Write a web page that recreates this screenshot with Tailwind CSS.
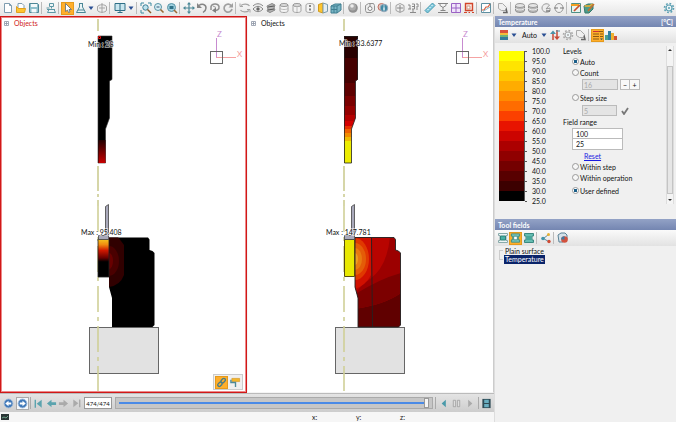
<!DOCTYPE html>
<html lang="en">
<head>
<meta charset="UTF-8">
<meta name="viewport" content="width=device-width, initial-scale=1.0">
<title>Temperature</title>
<script src="https://cdn.jsdelivr.net/npm/@tailwindcss/browser@4"></script>
</head>
<body class="flex h-screen flex-col overflow-hidden bg-[#f0f0f0] font-['Lato','Open_Sans',sans-serif] text-[7px] leading-[10px] text-[#111]">

<!-- Icon sprite, every icon is drawn on a 12x12 grid -->
<svg class="hidden">
  <symbol id="new" viewBox="0 0 12 12"><path d="M2.5 1.5h5l2 2v7h-7z" fill="#fff" stroke="#7f9db0"/><path d="M7.5 1.5v2h2" fill="none" stroke="#7f9db0"/></symbol>
  <symbol id="open" viewBox="0 0 12 12"><path d="M3 1.5h4l2 2v3H3z" fill="#fff" stroke="#7f9db0"/><path d="M1.5 10.5v-6l2 2h7l-1 4z" fill="#ffc52e" stroke="#e0a020"/></symbol>
  <symbol id="save" viewBox="0 0 12 12"><path d="M1.5 1.5h8l1 1v8h-9z" fill="#8fc0cc" stroke="#4f8796"/><path d="M3 2h6v3H3zM3.5 7h5v3.500h-5z" fill="#f3f8fa"/></symbol>
  <symbol id="forge" viewBox="0 0 12 12"><path d="M4.500 1.500h4v3h-4zM6.500 4.500v2M2 7.500h8M2.500 10.500l1.500-3h5l1.500 3zM1.500 6h3" fill="#eef5f7" stroke="#5c97a5"/></symbol>
  <symbol id="cursor" viewBox="0 0 12 12"><path d="M3.500 1.500v8l2-1.500 1 2.500 1.500-.6-1-2.400h2.500z" fill="#fff" stroke="#5a6b78" stroke-width=".8"/></symbol>
  <symbol id="flask" viewBox="0 0 12 12"><path d="M4 1.500h4M4.500 2v3L1.500 10.500h9L7.500 5V2M3 8h6" fill="#e9f4f6" stroke="#4a8796"/></symbol>
  <symbol id="half" viewBox="0 0 12 12"><path d="M1.500 5c0-3 9-3 9 0v3c0 3-9 3-9 0zM6 1v10M3 6h6" fill="#eee" stroke="#a5a5a5"/></symbol>
  <symbol id="monitor" viewBox="0 0 12 12"><path d="M1 1.500h10v7H1z" fill="#c9e6ef" stroke="#2e6f86"/><path d="M6 2v6M3.500 10.500h5M6 8.500v2" stroke="#2e6f86"/></symbol>
  <symbol id="zoomfit" viewBox="0 0 12 12"><path d="M1 4V1h3M8 1h3v3M1 8v3h3" fill="none" stroke="#3d8aa0"/><circle cx="5.500" cy="5.500" r="2.700" fill="#bfe3ee" stroke="#3d7f96"/><path d="M7.500 7.500 11 11" stroke="#8a5a2a" stroke-width="1.400"/></symbol>
  <symbol id="zoomout" viewBox="0 0 12 12"><circle cx="5" cy="5" r="3.500" fill="#d6edf4" stroke="#5793a5"/><path d="M3.500 5h3" stroke="#357"/><path d="m7.500 7.500 3 3" stroke="#9a6a34" stroke-width="1.600"/></symbol>
  <symbol id="zoomin" viewBox="0 0 12 12"><circle cx="5.500" cy="5.500" r="4" fill="#9ed0df" stroke="#5793a5"/><path d="M3.500 4h4v3h-4z" fill="#2f7288"/><path d="m8 8 3 3" stroke="#9a6a34" stroke-width="1.600"/></symbol>
  <symbol id="move" viewBox="0 0 12 12"><path d="M6 1v10M1 6h10" stroke="#4a8796" stroke-width="1.200"/><path d="m6 0 2 2.500H4zM6 12l2-2.500H4zM0 6l2.500-2v4zM12 6 9.500 4v4z" fill="#4a8796"/></symbol>
  <symbol id="undo" viewBox="0 0 12 12"><path d="M3 3.500c3-2.500 7-1 7 2.500 0 2.500-1.500 3.500-3 4.500" fill="none" stroke="#858585" stroke-width="1.500"/><path d="M1 1v5h5z" fill="#858585"/></symbol>
  <symbol id="orbit" viewBox="0 0 12 12"><path d="M2 8V4.500C3 1.500 9 1 10 4.500c.5 3-2 4-4 4" fill="none" stroke="#909090" stroke-width="1.500"/><path d="M7 5.500v5.500l-4-2.500z" fill="#808080"/><path d="m4 4 3 1.500" stroke="#999"/></symbol>
  <symbol id="refresh" viewBox="0 0 12 12"><path d="M9.500 4A4 4 0 1 0 10 7" fill="none" stroke="#a0a0a0" stroke-width="1.700"/><path d="M11 1v4.500H6.500z" fill="#a0a0a0"/></symbol>
  <symbol id="loop" viewBox="0 0 12 12"><path d="M2 3.500c2-2 7-2 8.500.5M10 8.500c-2 2-7 2-8.500-.5" fill="none" stroke="#a5a5a5" stroke-width="1.200"/><path d="M1 1.500v3h3M11 10.500v-3H8" fill="none" stroke="#a5a5a5"/></symbol>
  <symbol id="eye" viewBox="0 0 12 12"><path d="M1 4c3-3 7-3 10 0M1 7c3-3.500 7-3.500 10 0-3 3.500-7 3.500-10 0z" fill="#ececec" stroke="#858585"/><circle cx="6" cy="7" r="1.700" fill="#666"/></symbol>
  <symbol id="solid" viewBox="0 0 12 12"><path d="m2 4 5-2.500 3 1.500-1 3 1 2-5 2.500L2 9l1-2z" fill="#b5b5b5" stroke="#858585"/><path d="m3 5 6-1M3 8l6-1" stroke="#555"/></symbol>
  <symbol id="cyl" viewBox="0 0 12 12"><path d="M2 3v6c0 2 8 2 8 0V3" fill="#f3f3f3" stroke="#a3a3a3"/><ellipse cx="6" cy="3" rx="4" ry="1.500" fill="#ddd" stroke="#999"/><path d="M2 6c0 2 8 2 8 0" fill="none" stroke="#bbb"/></symbol>
  <symbol id="cylopen" viewBox="0 0 12 12"><path d="M2 3v6c0 2 8 2 8 0V3z" fill="#f3f3f3" stroke="#a3a3a3"/><ellipse cx="6" cy="3" rx="4" ry="1.500" fill="#ddd" stroke="#999"/><path d="M6 4v6" stroke="#bbb"/></symbol>
  <symbol id="cyldash" viewBox="0 0 12 12"><path d="M2 3v6c0 2 8 2 8 0V3c0-2-8-2-8 0z" fill="#f5f5f5" stroke="#a3a3a3"/><path d="M6 3v7" stroke="#555" stroke-width="1.400" stroke-dasharray="2 1.500"/></symbol>
  <symbol id="cylcut" viewBox="0 0 12 12"><path d="M1.500 2.500 6 1v10l-4.500-1.500z" fill="#ffc52e" stroke="#cf9a20"/><path d="m6 1 4.500 1.500v7L6 11z" fill="#e4edf2" stroke="#7a9bab"/></symbol>
  <symbol id="cube" viewBox="0 0 12 12"><path d="m1 4 4-2h6v6l-4 3H1z" fill="#78b4c4" stroke="#3f7f91"/><path d="M1 4h6v7M7 4l4-2M4 4v7M1 7.500h6" fill="none" stroke="#3f7f91"/></symbol>
  <symbol id="sphere" viewBox="0 0 12 12"><circle cx="6" cy="6" r="4.800" fill="#8f8f8f"/><circle cx="5.500" cy="5" r="3.500" fill="#adadad"/><circle cx="5" cy="4" r="1.800" fill="#ececec"/></symbol>
  <symbol id="box" viewBox="0 0 12 12"><path d="m1.500 3.500 3-2h5l1 2v5l-3 2h-5l-1-2z" fill="#eee" stroke="#949494"/><circle cx="6" cy="6.500" r="2" fill="#fff" stroke="#888"/><path d="M6 2v2" stroke="#888"/></symbol>
  <symbol id="info" viewBox="0 0 12 12"><circle cx="4.500" cy="5" r="3.500" fill="#e6c8c2" stroke="#c07060"/><circle cx="7" cy="6" r="3.800" fill="#3f89a4" stroke="#9ab"/><path d="M7 3.500v1M7 5.300v3.200" stroke="#fff" stroke-width="1.300"/></symbol>
  <symbol id="boxpick" viewBox="0 0 12 12"><path d="M2 3.500 6 1.500l4 2v5l-4 2-4-2z" fill="#eee" stroke="#a0a0a0"/><path d="M6 3v7M3 6h6" stroke="#888"/></symbol>
  <symbol id="numbers" viewBox="0 0 12 12"><path d="M1 3h2v4M1 7h3M5 2h2.500v5H5M5 4.500h2.500M9 2h2v3H9M9 7h2M6 7v4M3 10.500h6" fill="none" stroke="#8a8a8a"/></symbol>
  <symbol id="ruler" viewBox="0 0 12 12"><path d="M1 8.500 8.500 1 11 3.500 3.500 11z" fill="#7fc8dc" stroke="#4a9ab0"/><path d="m3.500 7 1 1m1-3 1 1m1-3 1 1" stroke="#fff"/></symbol>
  <symbol id="caliper" viewBox="0 0 12 12"><path d="M1 1.500h10M3 1.500v2l3 2 3-2v-2M6 5.500v3M1 10.500h10M3.500 8.500h5" fill="none" stroke="#858585"/></symbol>
  <symbol id="grid" viewBox="0 0 12 12"><path d="M1.500 1.500h9v9h-9zM6 1.500v9M1.500 6h9" fill="#f0e4fa" stroke="#9a62c4"/></symbol>
  <symbol id="select" viewBox="0 0 12 12"><path d="M2.500 1.500h7v7h-7z" fill="#fbe9e2" stroke="#d2452b" stroke-width="1.400"/><path d="M4 4h3v3H4z" fill="#fff" stroke="#c98"/><path d="M1 10.500h3M5.500 10.500H7M9 10.500h2" stroke="#d2452b"/></symbol>
  <symbol id="chart" viewBox="0 0 12 12"><path d="M1.500 1.500h9v9h-9z" fill="#fff" stroke="#5e8fa0"/><path d="M1.500 8H4l2-3h2l2-3" fill="none" stroke="#d65b3a" stroke-width="1.200"/><path d="M3 9.500 10 5" stroke="#8bc"/></symbol>
  <symbol id="copy" viewBox="0 0 12 12"><path d="M1.500 1.500h4l4 4v3h-5l-3-2z" fill="#f0f0f0" stroke="#aaa"/><path d="M6 10.500h4l-1-4" fill="none" stroke="#666" stroke-width="1.500"/></symbol>
  <symbol id="disc" viewBox="0 0 12 12"><path d="M1.500 3.500v5c0 2.500 9 2.500 9 0v-5" fill="#b8b8b8" stroke="#8e8e8e"/><ellipse cx="6" cy="3.500" rx="4.500" ry="2" fill="#e5e5e5" stroke="#999"/><path d="M1.500 6c0 2.500 9 2.500 9 0" fill="none" stroke="#eee"/></symbol>
  <symbol id="pie" viewBox="0 0 12 12"><path d="M9.500 3C7 .5 2 2 2 6s5 5.500 8 3V6L6 7z" fill="#eee" stroke="#999"/><path d="M6 9h4" stroke="#777" stroke-width="1.400"/></symbol>
  <symbol id="ring" viewBox="0 0 12 12"><ellipse cx="6" cy="6" rx="4" ry="4.500" fill="#f1f1f1" stroke="#999"/><path d="M1 6h4M7 6h4" stroke="#777"/></symbol>
  <symbol id="note" viewBox="0 0 12 12"><path d="M1.500 1.500h9v9h-9z" fill="#e9f3ee" stroke="#4e9086"/><path d="M1 3h8" stroke="#f2a020" stroke-width="2"/><path d="m4 9 6-6" stroke="#c9502d" stroke-width="1.700"/></symbol>
  <symbol id="paint" viewBox="0 0 12 12"><path d="m1 4 4-2h5v5l-4 4H2z" fill="#4d9c8a" stroke="#35786b"/><path d="M1.500 4h5l3-2" stroke="#f2b030" stroke-width="1.500" fill="none"/><path d="m5 9 6-7" stroke="#c9702d" stroke-width="1.500"/></symbol>
  <symbol id="gear" viewBox="0 0 12 12"><circle cx="6" cy="6" r="4.500" fill="none" stroke="currentColor" stroke-width="1.600" stroke-dasharray="1.760 1.760"/><circle cx="6" cy="6" r="3" fill="#eef5f7" stroke="currentColor" stroke-width="1.200"/><circle cx="6" cy="6" r="1" fill="currentColor"/></symbol>
  <symbol id="caret" viewBox="0 0 8 12"><path d="M1.500 4.500h5L4 8z" fill="#2a4f93"/></symbol>
  <symbol id="palette" viewBox="0 0 12 12"><path d="M2 1h8v3H2z" fill="#d9503a"/><path d="M2 4h8v2H2z" fill="#f4bc38"/><path d="M2 6h8v2H2z" fill="#6fb37a"/><path d="M2 8h8v3H2z" fill="#337a9a"/></symbol>
  <symbol id="swap" viewBox="0 0 12 12"><path d="M4 11V3M8 1v8" stroke="#c64a36" stroke-width="1.500"/><path d="M1 5 4 1.500 7 5" fill="#4b93a8"/><path d="M5 7.500 8 11l3-3.500" fill="#c64a36"/><path d="M7 2h4" stroke="#4b93a8"/></symbol>
  <symbol id="legend" viewBox="0 0 12 12"><path d="M1 2.500h10M1 5h6M1 7.500h6M1 10h6" stroke="#8a5a14"/><path d="M1 2.500h6" stroke="#c33"/><path d="M8 5h3M8 7.500h3" stroke="#8a5a14"/><path d="M8 9.500h3L9.500 11z" fill="#246"/></symbol>
  <symbol id="hist" viewBox="0 0 12 12"><path d="M0 11V6h3v5z" fill="#4da08f"/><path d="M3 11V2h3v9z" fill="#2e7fa0"/><path d="M6 11V4h3v7z" fill="#f0b030"/><path d="M9 11V7h3v4z" fill="#cf5236"/></symbol>
  <symbol id="field" viewBox="0 0 12 12"><path d="M1.500 1.500h9v2H9v5h1.500v2h-9v-2H3v-5H1.500z" fill="#eef5f5" stroke="#8aa"/><path d="M3.500 4h5v4h-5z" fill="#46b0a4" stroke="#2f8077"/></symbol>
  <symbol id="fieldtool" viewBox="0 0 12 12"><path d="M1.500 1.500h9v2.500H9v4h1.500v2.500h-9V8H3V4H1.500z" fill="#7ccac0" stroke="#3b8a82"/><path d="M4 4h4v4H4z" fill="#fff" stroke="#3b8a82"/></symbol>
  <symbol id="fieldall" viewBox="0 0 12 12"><path d="M1.500 1.500h9v2.500H9v4h1.500v2.500h-9V8H3V4H1.500z" fill="#66bdb2" stroke="#3b8a82"/><path d="M4 4h4v4H4z" fill="#46a89c"/></symbol>
  <symbol id="share" viewBox="0 0 12 12"><path d="m8.500 2.500-5 4 5 3" fill="none" stroke="#5a8da0"/><circle cx="8.500" cy="2.500" r="1.500" fill="#e8b030"/><circle cx="3" cy="6.500" r="1.800" fill="#3f93a8"/><circle cx="9" cy="9.500" r="1.700" fill="#cf4a34"/></symbol>
  <symbol id="stop" viewBox="0 0 12 12"><path d="m1 3 3-2h4l2 2v4l-4 3H2z" fill="#d5e2ea" stroke="#5b8296"/><circle cx="7.500" cy="7.500" r="3.300" fill="#d2523e"/><path d="M7.500 7.500V4.200a3.300 3.300 0 0 0-3.300 3.300z" fill="#3f78a0"/></symbol>
  <symbol id="back" viewBox="0 0 12 12"><circle cx="6" cy="6" r="4.800" fill="#3f78b8" stroke="#9bb8d8"/><path d="M9 5H6V3L2.500 6 6 9V7h3z" fill="#fff"/></symbol>
  <symbol id="fwd" viewBox="0 0 12 12"><circle cx="6" cy="6" r="4.800" fill="#3f78b8" stroke="#9bb8d8"/><path d="M3 5h3V3l3.500 3L6 9V7H3z" fill="#fff"/></symbol>
  <symbol id="first" viewBox="0 0 12 12"><path d="M2.500 2v8.500" stroke="currentColor" stroke-width="1.500"/><path d="M9.500 2v8.500L4 6.200z" fill="currentColor"/></symbol>
  <symbol id="prev" viewBox="0 0 12 12"><path d="M11 4.500H6V2L1 6l5 4V7.500h5z" fill="currentColor"/></symbol>
  <symbol id="play" viewBox="0 0 12 12"><path d="M8.500 2v8L4 6z" fill="currentColor"/></symbol>
  <symbol id="pause" viewBox="0 0 12 12"><path d="M2.500 2.500h2.500v7H2.500zM7 2.500h2.500v7H7z" fill="#ddd" stroke="#999" stroke-width=".8"/></symbol>
  <symbol id="film" viewBox="0 0 12 12"><path d="M1.500 1h9v10h-9z" fill="#2e4a55"/><path d="M3.500 2h5v3.500h-5zM3.500 6.500h5V10h-5z" fill="#69aec0"/></symbol>
  <symbol id="link" viewBox="0 0 12 12"><g fill="none" stroke="#4a7d86" stroke-width="1.500"><rect x="-2.500" y="-1.500" width="5.500" height="3.400" rx="1.700" transform="translate(4 8) rotate(-45)"/><rect x="-2.500" y="-1.500" width="5.500" height="3.400" rx="1.700" transform="translate(7.500 4) rotate(-45)"/></g></symbol>
  <symbol id="roller" viewBox="0 0 12 12"><path d="M2 1.500h8.500V5H2z" fill="#f4b62c" stroke="#d09018" stroke-width=".6"/><path d="M1 3v3h5v5" fill="none" stroke="#4d8a98" stroke-width="1.500"/></symbol>
  <symbol id="triad" viewBox="0 0 32 34">
    <path d="M8.500 7v20" stroke="#c78bd0"/><path d="M8.500 26.500H28" stroke="#f5a3a3"/>
    <rect x="2.500" y="20.500" width="12" height="12" fill="none" stroke="#666"/>
  </symbol>
</svg>

<!-- Main toolbar -->
<header class="flex h-4 shrink-0 items-center bg-linear-to-b from-[#fafafa] to-[#e6e6e6] pl-px [&_button]:flex [&_button]:h-[13px] [&_button]:w-[13px] [&_button]:shrink-0 [&_button]:items-center [&_button]:justify-center [&_hr]:mx-px [&_hr]:h-3 [&_hr]:w-[2px] [&_hr]:border-0 [&_hr]:border-l [&_hr]:border-[#bbb] [&_svg]:size-3 [&_svg]:shrink-0">
  <button aria-label="New"><svg><use href="#new"/></svg></button>
  <button aria-label="Open"><svg><use href="#open"/></svg></button>
  <button aria-label="Save"><svg><use href="#save"/></svg></button>
  <hr>
  <button aria-label="Process"><svg><use href="#forge"/></svg></button>
  <hr>
  <button aria-label="Select" class="border border-[#e59a1c] bg-[#ffae2b]"><svg><use href="#cursor"/></svg></button>
  <button aria-label="Material"><svg><use href="#flask"/></svg></button>
  <svg class="w-2!"><use href="#caret"/></svg>
  <button aria-label="Symmetry"><svg><use href="#half"/></svg></button>
  <hr>
  <button aria-label="Windows" class="w-[15px]!"><svg><use href="#monitor"/></svg></button>
  <svg class="w-2!"><use href="#caret"/></svg>
  <hr>
  <button aria-label="Zoom to fit"><svg><use href="#zoomfit"/></svg></button>
  <button aria-label="Zoom out"><svg><use href="#zoomout"/></svg></button>
  <button aria-label="Zoom in"><svg><use href="#zoomin"/></svg></button>
  <hr>
  <button aria-label="Pan"><svg><use href="#move"/></svg></button>
  <button aria-label="Rotate back"><svg><use href="#undo"/></svg></button>
  <button aria-label="Orbit"><svg><use href="#orbit"/></svg></button>
  <button aria-label="Refresh"><svg><use href="#refresh"/></svg></button>
  <hr>
  <button aria-label="Swap"><svg><use href="#loop"/></svg></button>
  <button aria-label="Visibility"><svg><use href="#eye"/></svg></button>
  <button aria-label="Solid"><svg><use href="#solid"/></svg></button>
  <button aria-label="Cylinder"><svg><use href="#cyl"/></svg></button>
  <button aria-label="Open cylinder"><svg><use href="#cylopen"/></svg></button>
  <button aria-label="Axis"><svg><use href="#cyldash"/></svg></button>
  <button aria-label="Cut"><svg><use href="#cylcut"/></svg></button>
  <button aria-label="Mesh"><svg><use href="#cube"/></svg></button>
  <hr>
  <button aria-label="Shading"><svg><use href="#sphere"/></svg></button>
  <hr>
  <button aria-label="Box"><svg><use href="#box"/></svg></button>
  <button aria-label="Info"><svg><use href="#info"/></svg></button>
  <hr>
  <button aria-label="Pick"><svg><use href="#boxpick"/></svg></button>
  <button aria-label="Values"><svg><use href="#numbers"/></svg></button>
  <hr>
  <button aria-label="Ruler"><svg><use href="#ruler"/></svg></button>
  <button aria-label="Caliper"><svg><use href="#caliper"/></svg></button>
  <button aria-label="Grid"><svg><use href="#grid"/></svg></button>
  <button aria-label="Region"><svg><use href="#select"/></svg></button>
  <hr>
  <button aria-label="Chart"><svg><use href="#chart"/></svg></button>
  <hr>
  <button aria-label="Copy"><svg><use href="#copy"/></svg></button>
  <hr>
  <button aria-label="Disc"><svg><use href="#disc"/></svg></button>
  <button aria-label="Discs"><svg><use href="#disc"/></svg></button>
  <button aria-label="Sector"><svg><use href="#pie"/></svg></button>
  <button aria-label="Ring"><svg><use href="#ring"/></svg></button>
  <hr>
  <button aria-label="Notes"><svg><use href="#note"/></svg></button>
  <button aria-label="Paint"><svg><use href="#paint"/></svg></button>
  <button aria-label="Settings" class="mr-px ml-auto text-[#5a9fb2]"><svg><use href="#gear"/></svg></button>
</header>

<div class="flex min-h-0 grow">
  <main class="flex min-w-0 grow flex-col">
    <div class="grid min-h-0 grow grid-cols-2 bg-white">

      <!-- Left view -->
      <section class="relative min-h-0 border border-[#d01818] outline -outline-offset-2 outline-[#e88]">
        <button class="absolute top-px left-[3px] flex items-center gap-[5px] text-[#d01818]">
          <svg class="size-[5px]" viewBox="0 0 5 5"><path d="M.5.5h4v4h-4zM2.500 1v3M1 2.500h3" fill="none" stroke="#8a93a3" stroke-width=".8"/></svg>Objects
        </button>
        <svg class="block h-full w-full" viewBox="1 17 245 375">
          <defs>
            <linearGradient id="tip" x2="0" y2="1"><stop offset="0" stop-color="#200"/><stop offset="1" stop-color="#c80000"/></linearGradient>
            <linearGradient id="heat" x2="0" y2="1"><stop offset="0" stop-color="#f5c820"/><stop offset=".15" stop-color="#f08a10"/><stop offset=".3" stop-color="#d01800"/><stop offset=".5" stop-color="#600"/><stop offset=".6" stop-color="#000"/></linearGradient>
            <clipPath id="die"><path d="M109 237.500h39l1.500 2v10.500l3 1 2 2v72l-2 2h-40.500v-29l-3-11z"/></clipPath>
          </defs>
          <rect x="89.500" y="327.500" width="69" height="46" fill="#e2e2e2" stroke="#666"/>
          <path d="M98 19v12M98 166v25M98 194v3M98 200v6" stroke="#d6d6a8" stroke-width="2"/>
          <path d="M98 206v185" stroke="#d0d098" stroke-width="2" stroke-dasharray="26 5 4 5" opacity=".8"/>
          <path d="M98 36h14v43.500l-2.500 1.500v37l-4 11v34H98z" stroke="#333" stroke-width=".6"/>
          <path d="M98.500 140h7v23h-7z" fill="url(#tip)"/>
          <path d="M98.500 36.500h2v2h-2z" fill="none" stroke="#e01010"/>
          <g clip-path="url(#die)">
            <path d="M108 237h47v91h-47z"/>
            <path d="M108 237h10l6 8v30q-4 11-16 12z" fill="#300000"/>
            <ellipse cx="109" cy="261" rx="10" ry="15" fill="#4a0000"/>
            <ellipse cx="109" cy="261" rx="4" ry="8" fill="#680000"/>
          </g>
          <path d="M98 239h11v38H98z" fill="url(#heat)" stroke="#222" stroke-width=".8"/>
          <path d="M98.500 235.500h7v-29l3-2v35h-10z" fill="#a9a9bb" stroke="#444" stroke-width=".8"/>
          <use href="#triad" x="208" y="31" width="32" height="34"/>
          <g class="text-[7px]" stroke="#fff" stroke-opacity=".7" stroke-width="1.500" paint-order="stroke" fill="#111">
            <text x="88" y="47">Min : 28</text>
            <text x="81" y="235">Max : 95.408</text>
          </g>
          <text x="217" y="37" class="text-[8px]" fill="#c78bd0">Z</text>
          <text x="237" y="57" class="text-[8px]" fill="#f59a9a">X</text>
        </svg>
        <div class="absolute right-[3px] bottom-[2px] flex h-4 w-[30px] items-center justify-around border border-[#ccc] bg-[#f0f0f0]">
          <button aria-label="Link views" class="border border-[#e59a1c] bg-[#ffae2b]"><svg class="size-[11px]"><use href="#link"/></svg></button>
          <button aria-label="Apply style"><svg class="size-[11px]"><use href="#roller"/></svg></button>
        </div>
      </section>

      <!-- Right view -->
      <section class="relative min-h-0 border border-[#f4f4f4] border-r-[#ccc]">
        <button class="absolute top-px left-[3px] flex items-center gap-[5px]">
          <svg class="size-[5px]" viewBox="0 0 5 5"><path d="M.5.5h4v4h-4zM2.500 1v3M1 2.500h3" fill="none" stroke="#8a93a3" stroke-width=".8"/></svg>Objects
        </button>
        <svg class="block h-full w-full" viewBox="2 17 245 375">
          <defs>
            <clipPath id="punch"><path d="M98 36h14v43.500l-2.500 1.500v37l-4 11v34H98z"/></clipPath>
          </defs>
          <rect x="89.500" y="327.500" width="69" height="46" fill="#e2e2e2" stroke="#666"/>
          <path d="M98 19v12M98 166v25M98 194v3M98 200v6" stroke="#d6d6a8" stroke-width="2"/>
          <path d="M98 206v185" stroke="#d0d098" stroke-width="2" stroke-dasharray="26 5 4 5" opacity=".8"/>
          <g clip-path="url(#punch)">
            <path d="M98 36h14v22H98z" fill="#280000"/>
            <path d="M98 58h14v25H98z" fill="#450000"/>
            <path d="M98 83h14v13H98z" fill="#5e0000"/>
            <path d="M98 96h14v10H98z" fill="#7a0000"/>
            <path d="M98 106h14v9H98z" fill="#940000"/>
            <path d="M98 115h14v6H98z" fill="#b40000"/>
            <path d="M98 121h14v5H98z" fill="#d40000"/>
            <path d="M98 126h14v3H98z" fill="#e83000"/>
            <path d="M98 129h14v4H98z" fill="#ee6000"/>
            <path d="M98 133h14v4H98z" fill="#f08c00"/>
            <path d="M98 137h14v4H98z" fill="#eebb00"/>
            <path d="M98 141h14v22H98z" fill="#ecec00"/>
          </g>
          <path d="M98.500 36.500h13v43l-2 1.500v37l-4 11v34h-7z" fill="none" stroke="#222" stroke-width=".8"/>
          <g clip-path="url(#die)">
            <path d="M108 237h47v91h-47z" fill="#9c0000"/>
            <path d="M108 327v-18q30-4 47-16v35z" fill="#600000"/>
            <path d="M108 309q30-4 47-16v-20q-22 6-47 22z" fill="#7c0000"/>
            <path d="M108 237h36q-3 30-20 42-8 5-16 16z" fill="#b80400"/>
            <path d="M108 237h17v38q-5 10-16 14z" fill="#d01000"/>
            <ellipse cx="109" cy="259" rx="14" ry="21" fill="#e03800"/>
            <ellipse cx="109" cy="259" rx="11" ry="16" fill="#e45c08"/>
            <ellipse cx="109" cy="259" rx="7" ry="11" fill="#e87a10"/>
            <ellipse cx="109" cy="259" rx="3" ry="6" fill="#eca020"/>
          </g>
          <path d="M109 237.500h39l1.500 2v10.500l3 1 2 2v72l-2 2h-40.500v-29l-3-11zM125.500 238l1 89" fill="none" stroke="#222" stroke-width=".9"/>
          <path d="M98.500 239.500h10v37h-10z" fill="#e8e800" stroke="#554a10"/>
          <path d="M98.500 235.500h7v-29l3-2v35h-10z" fill="#a9a9bb" stroke="#444" stroke-width=".8"/>
          <use href="#triad" x="208" y="31" width="32" height="34"/>
          <g class="text-[7px]" stroke="#fff" stroke-opacity=".7" stroke-width="1.500" paint-order="stroke" fill="#111">
            <text x="93" y="46">Min : 33.6377</text>
            <text x="80" y="235">Max : 147.781</text>
          </g>
          <text x="217" y="37" class="text-[8px]" fill="#c78bd0">Z</text>
          <text x="237" y="57" class="text-[8px]" fill="#f59a9a">X</text>
        </svg>
      </section>
    </div>

    <!-- Playback -->
    <div class="flex h-[19px] shrink-0 items-center gap-px border-t border-[#bbb] bg-linear-to-b from-[#e4e4e4] to-[#cdcdcd] pr-[2px] pl-[3px] [&_button]:shrink-0 [&_hr]:h-3 [&_hr]:w-px [&_hr]:border-0 [&_hr]:border-l [&_hr]:border-[#aaa] [&_svg]:size-[11px]">
      <button aria-label="Step back" class="w-3"><svg><use href="#back"/></svg></button>
      <button aria-label="Step forward" class="border border-[#aaa] bg-[#f4f8fc]"><svg><use href="#fwd"/></svg></button>
      <hr>
      <div class="flex w-[51px] justify-around">
        <button aria-label="First" class="text-[#5ba3ae]"><svg><use href="#first"/></svg></button>
        <button aria-label="Previous" class="text-[#5ba3ae]"><svg><use href="#prev"/></svg></button>
        <button aria-label="Next" class="rotate-180 text-[#aaa]"><svg><use href="#prev"/></svg></button>
        <button aria-label="Last" class="rotate-180 text-[#aaa]"><svg><use href="#first"/></svg></button>
      </div>
      <input aria-label="Step" value="474/474" class="h-3 w-[28px] shrink-0 border border-[#999] bg-white text-center text-[6px]">
      <div class="relative ml-[2px] flex h-3 min-w-0 grow items-center border border-[#aaa] bg-[#c6c6c6] px-[3px]">
        <div class="absolute inset-x-[3px] top-1 h-[2px] bg-[#4a8ae6]"></div>
        <input type="range" aria-label="Timeline" min="1" max="474" value="474" class="relative h-[10px] w-full appearance-none bg-transparent [&::-webkit-slider-thumb]:h-[10px] [&::-webkit-slider-thumb]:w-[5px] [&::-webkit-slider-thumb]:appearance-none [&::-webkit-slider-thumb]:border [&::-webkit-slider-thumb]:border-[#999] [&::-webkit-slider-thumb]:bg-[#f6f6f6]">
      </div>
      <hr class="ml-px">
      <div class="flex w-[40px] justify-around">
        <button aria-label="Play backwards" class="text-[#4a9aaa]"><svg><use href="#play"/></svg></button>
        <button aria-label="Pause"><svg><use href="#pause"/></svg></button>
        <button aria-label="Play" class="rotate-180 text-[#aaa]"><svg><use href="#play"/></svg></button>
      </div>
      <hr>
      <button aria-label="Record" class="ml-px"><svg><use href="#film"/></svg></button>
    </div>

    <!-- Status bar -->
    <footer class="flex h-[10px] shrink-0 items-center bg-[#f6f6f6] pl-[1px]">
      <svg class="h-[6px] w-2" viewBox="0 0 8 6"><path d="M0 0h8v6H0z" fill="#2b3636"/><path d="m1 4 2-1 2 1 2-2" fill="none" stroke="#7fc0a0" stroke-width=".8"/></svg>
      <div class="mr-[50px] ml-auto grid w-[132px] grid-cols-3"><span>x:</span><span>y:</span><span>z:</span></div>
    </footer>
  </main>

  <!-- Side panel -->
  <aside class="flex w-[182px] shrink-0 flex-col border-l border-[#ddd] [&_hr]:mx-px [&_hr]:h-3 [&_hr]:w-[2px] [&_hr]:border-0 [&_hr]:border-l [&_hr]:border-[#bbb]">
    <h2 class="flex h-[11px] items-center justify-between bg-linear-to-b from-[#93a2c6] to-[#7486b1] px-[3px] font-bold text-white"><span>Temperature</span><span>[°C]</span></h2>
    <div class="flex h-4 items-center bg-linear-to-b from-[#fafafa] to-[#e2e2e2] pl-[2px] [&_button]:flex [&_button]:h-[13px] [&_button]:w-[13px] [&_button]:items-center [&_button]:justify-center [&_svg]:size-3 [&_svg]:shrink-0">
      <button aria-label="Colour scale"><svg><use href="#palette"/></svg></button>
      <svg class="w-2!"><use href="#caret"/></svg>
      <button class="ml-1 w-auto! gap-[3px]">Auto<svg class="w-2!"><use href="#caret"/></svg></button>
      <button aria-label="Swap range"><svg><use href="#swap"/></svg></button>
      <button aria-label="Options" class="text-[#aaa]"><svg><use href="#gear"/></svg></button>
      <button aria-label="Copy scale"><svg><use href="#copy"/></svg></button>
      <hr>
      <button aria-label="Legend" class="border border-[#e59a1c] bg-[#ffae2b]"><svg><use href="#legend"/></svg></button>
      <button aria-label="Histogram"><svg><use href="#hist"/></svg></button>
    </div>

    <div class="flex pt-[3px] pr-[2px] pl-1">
      <div class="mt-[5px] flex h-[150px] w-[26px] flex-col border-r border-[#555]">
        <i class="grow bg-[#ffff00]"></i>
        <i class="grow bg-[#ffe400]"></i>
        <i class="grow bg-[#ffc800]"></i>
        <i class="grow bg-[#ffac00]"></i>
        <i class="grow bg-[#ff8c00]"></i>
        <i class="grow bg-[#ff6c00]"></i>
        <i class="grow bg-[#fb4000]"></i>
        <i class="grow bg-[#e81400]"></i>
        <i class="grow bg-[#cc0400]"></i>
        <i class="grow bg-[#ac0000]"></i>
        <i class="grow bg-[#900000]"></i>
        <i class="grow bg-[#740000]"></i>
        <i class="grow bg-[#580000]"></i>
        <i class="grow bg-[#3c0000]"></i>
        <i class="grow bg-[#000000]"></i>
      </div>
      <ul class="w-[38px] [&_li]:flex [&_li]:h-[10px] [&_li]:items-center [&_li]:gap-[5px] [&_li]:before:h-px [&_li]:before:w-[2px] [&_li]:before:bg-[#555]">
        <li>100.0</li><li>95.0</li><li>90.0</li><li>85.0</li><li>80.0</li><li>75.0</li><li>70.0</li><li>65.0</li><li>60.0</li><li>55.0</li><li>50.0</li><li>45.0</li><li>40.0</li><li>35.0</li><li>30.0</li><li>25.0</li>
      </ul>
      <form class="grow [&_input[type=radio]]:size-[7px] [&_input[type=radio]]:appearance-none [&_input[type=radio]]:rounded-full [&_input[type=radio]]:border [&_input[type=radio]]:border-[#999] [&_input[type=radio]]:bg-[#f6f6f6] [&_input[type=radio]:checked]:bg-radial [&_input[type=radio]:checked]:from-[#1b5f8a] [&_input[type=radio]:checked]:from-45% [&_input[type=radio]:checked]:to-white [&_input[type=radio]:checked]:to-55% [&_label]:ml-[9px] [&_label]:flex [&_label]:h-[11px] [&_label]:items-center [&_label]:gap-px">
        <h3>Levels</h3>
        <label><input type="radio" name="levels" checked>Auto</label>
        <label><input type="radio" name="levels">Count</label>
        <div class="mt-px ml-[19px] flex h-[11px] items-center">
          <input aria-label="Count value" value="16" disabled class="mr-[2px] h-[11px] w-[36px] border border-[#bbb] bg-[#e4e4e4] px-px text-[#aaa]">
          <button type="button" aria-label="Decrease" class="flex h-[11px] w-[10px] items-center justify-center border border-[#bbb] bg-[#f8f8f8]">−</button>
          <button type="button" aria-label="Increase" class="flex h-[11px] w-[10px] items-center justify-center border border-l-0 border-[#bbb] bg-[#f8f8f8]">+</button>
        </div>
        <label class="mt-[2px]"><input type="radio" name="levels">Step size</label>
        <div class="mt-[2px] ml-[19px] flex h-[11px] items-center gap-1">
          <input aria-label="Step size value" value="5" disabled class="h-[11px] w-[35px] border border-[#bbb] bg-[#e4e4e4] px-px text-[#aaa]">
          <button type="button" aria-label="Apply step size"><svg class="h-2 w-2" viewBox="0 0 8 8"><path d="m1 4 2 3 4-6" fill="none" stroke="#777" stroke-width="1.800"/></svg></button>
        </div>
        <h3 class="mt-px">Field range</h3>
        <div class="mt-px ml-[9px] flex w-[51px] flex-col">
          <input aria-label="Range maximum" value="100" class="h-[11px] border border-[#bbb] bg-white px-[3px]">
          <input aria-label="Range minimum" value="25" class="h-[11px] border border-t-0 border-[#bbb] bg-white px-[3px]">
        </div>
        <a href="#" class="mt-px ml-[21px] block w-fit text-[#1a1ae0] underline">Reset</a>
        <label><input type="radio" name="range">Within step</label>
        <label><input type="radio" name="range">Within operation</label>
        <label class="mt-[2px]"><input type="radio" name="range" checked>User defined</label>
      </form>
      <div class="flex h-[158px] w-2 flex-col border-x border-[#ddd] bg-[#f4f4f4]">
        <svg class="h-[8px] w-full" viewBox="0 0 6 8"><path d="M1 5h4L3 3z" fill="#333"/></svg>
        <div class="mt-3 mb-[2px] grow border border-[#c4c4c4] bg-[#e6e6e6]"></div>
        <svg class="h-[8px] w-full" viewBox="0 0 6 8"><path d="M1 3h4L3 5z" fill="#333"/></svg>
      </div>
    </div>

    <h2 class="mt-[13px] flex h-[11px] items-center bg-linear-to-b from-[#93a2c6] to-[#7486b1] px-[3px] font-bold text-white">Tool fields</h2>
    <div class="flex h-4 items-center bg-linear-to-b from-[#fafafa] to-[#e2e2e2] pl-px [&_button]:flex [&_button]:h-[13px] [&_button]:w-[13px] [&_button]:items-center [&_button]:justify-center [&_svg]:size-3">
      <button aria-label="Workpiece field"><svg><use href="#field"/></svg></button>
      <button aria-label="Tool field" class="border border-[#e59a1c] bg-[#ffae2b]"><svg><use href="#fieldtool"/></svg></button>
      <button aria-label="All fields"><svg><use href="#fieldall"/></svg></button>
      <hr>
      <button aria-label="Share"><svg><use href="#share"/></svg></button>
      <hr>
      <button aria-label="Stop"><svg><use href="#stop"/></svg></button>
    </div>
    <ul class="flex flex-col items-start pl-[4px] [&_li]:flex [&_li]:h-[9px] [&_li]:items-center [&_li]:before:mr-px [&_li]:before:h-[5px] [&_li]:before:w-[4px] [&_li]:before:border-l [&_li]:before:border-[#ccc]">
      <li class="before:translate-y-[2px] before:border-t"><span class="px-px">Plain surface</span></li>
      <li class="before:-translate-y-[2px] before:border-b"><span class="bg-[#0a246a] px-px leading-[9px] text-white">Temperature</span></li>
    </ul>
  </aside>
</div>
</body>
</html>
